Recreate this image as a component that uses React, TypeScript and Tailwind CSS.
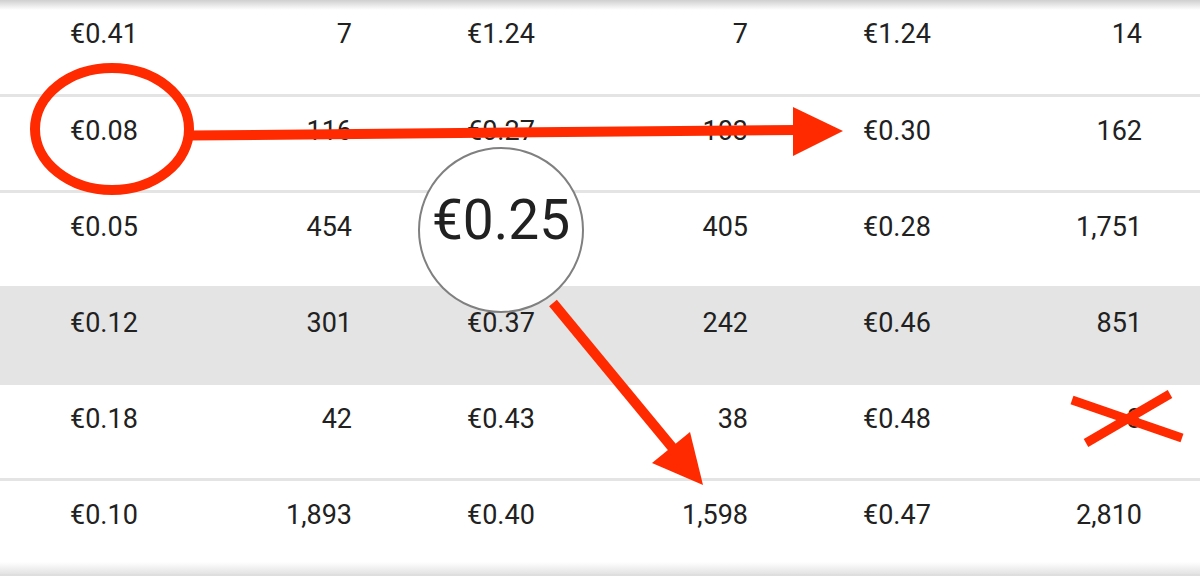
import React from 'react';

type Row = { cells: string[]; highlight?: boolean };

const rows: Row[] = [
  { cells: ['€0.41', '7', '€1.24', '7', '€1.24', '14'] },
  { cells: ['€0.08', '116', '€0.27', '103', '€0.30', '162'] },
  { cells: ['€0.05', '454', '€0.25', '405', '€0.28', '1,751'] },
  { cells: ['€0.12', '301', '€0.37', '242', '€0.46', '851'], highlight: true },
  { cells: ['€0.18', '42', '€0.43', '38', '€0.48', '8'] },
  { cells: ['€0.10', '1,893', '€0.40', '1,598', '€0.47', '2,810'] },
];

// the cell under the magnifier is drawn inside the magnifier instead
const HIDDEN = { row: 2, col: 2 };

function PriceRow({ row, index }: { row: Row; index: number }) {
  const pairs = [0, 2, 4].map((i) => [i, row.cells[i], row.cells[i + 1]] as const);
  return (
    <div
      className={`border-b-[3px] border-[#e4e4e4] pl-[70px] pt-[18px] ${index === 0 ? 'h-[97px]' : 'h-[96px]'} ${
        row.highlight ? 'bg-[#e4e4e4]' : 'bg-white'
      }`}
    >
      <div className="grid grid-cols-[282px_281px_279px] gap-x-[115px] text-[27px] leading-[32px] text-[#212121]">
        {pairs.map(([col, price, count]) => (
          <div key={col} className="flex justify-between">
            <span className={index === HIDDEN.row && col === HIDDEN.col ? 'invisible' : ''}>{price}</span>
            <span>{count}</span>
          </div>
        ))}
      </div>
    </div>
  );
}

export default function App() {
  return (
    <div className="relative h-[576px] w-[1200px] overflow-hidden bg-white font-['Roboto',sans-serif]">
      {rows.map((row, i) => (
        <PriceRow key={i} row={row} index={i} />
      ))}

      {/* edge shadows */}
      <div className="absolute inset-x-0 top-0 h-[10px] bg-gradient-to-b from-[#cfcfcf] to-transparent" />
      <div className="absolute inset-x-0 bottom-0 h-[14px] bg-gradient-to-t from-[#dedede] to-transparent" />

      {/* annotations */}
      <svg className="absolute left-0 top-0" width="1200" height="576" viewBox="0 0 1200 576">
        <ellipse cx="112" cy="129" rx="77" ry="61" fill="none" stroke="#ff2a00" strokeWidth="10" />
        <line x1="188" y1="135.5" x2="798" y2="130" stroke="#ff2a00" strokeWidth="10" />
        <polygon points="793,107 843,131 793,156" fill="#ff2a00" />
        <line x1="553" y1="303" x2="676" y2="452" stroke="#ff2a00" strokeWidth="10" />
        <polygon points="652,463 690,432 703,485" fill="#ff2a00" />
        <line x1="1072" y1="400" x2="1182" y2="438" stroke="#ff2a00" strokeWidth="9" />
        <line x1="1086" y1="443" x2="1170" y2="394" stroke="#ff2a00" strokeWidth="9" />
      </svg>

      {/* magnifier */}
      <div className="absolute left-[418px] top-[147px] flex h-[166px] w-[166px] items-center justify-center rounded-full border-2 border-[#808080] bg-white pb-[20px]">
        <span className="text-[55px] leading-none text-[#212121]">€0.25</span>
      </div>
    </div>
  );
}
